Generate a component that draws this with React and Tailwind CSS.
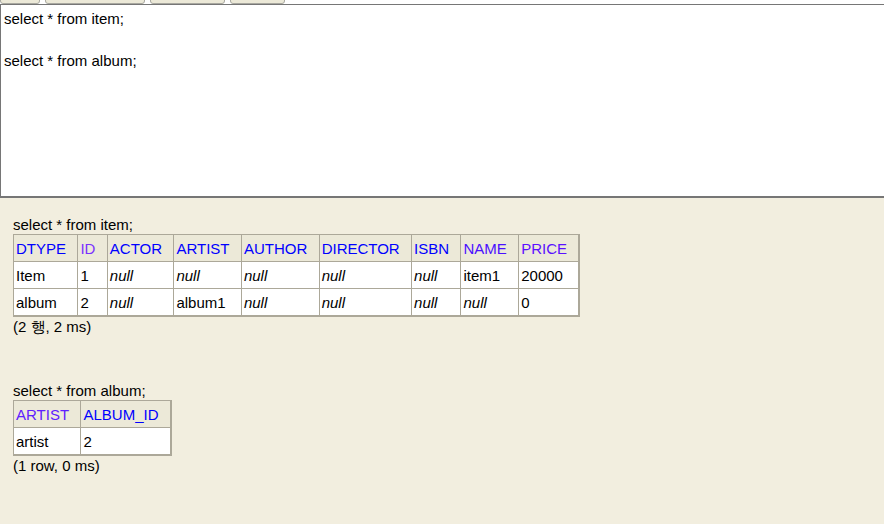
import React from "react";

const items = {
    columns: [
        { name: "DTYPE", color: "text-[#0000ff]" },
        { name: "ID", color: "text-[#7a30ff]" },
        { name: "ACTOR", color: "text-[#0000ff]" },
        { name: "ARTIST", color: "text-[#0000ff]" },
        { name: "AUTHOR", color: "text-[#0000ff]" },
        { name: "DIRECTOR", color: "text-[#0000ff]" },
        { name: "ISBN", color: "text-[#0000ff]" },
        { name: "NAME", color: "text-[#4a10ff]" },
        { name: "PRICE", color: "text-[#5a10ff]" },
    ],
    rows: [
        ["Item", "1", null, null, null, null, null, "item1", "20000"],
        ["album", "2", null, "album1", null, null, null, null, "0"],
    ],
};

const albums = {
    columns: [
        { name: "ARTIST", color: "text-[#6020ff]" },
        { name: "ALBUM_ID", color: "text-[#0000ff]" },
    ],
    rows: [["artist", "2"]],
};

// ResultTable renders one result set the way the console does
function ResultTable({ data }) {
    return (
        <table className="border-collapse border border-r-2 border-b-2 border-[#aca899]">
            <thead>
                <tr>
                    {data.columns.map((c) => (
                        <th
                            key={c.name}
                            className={`border border-[#aca899] bg-[#ece9d8] font-normal text-left pl-[2px] pr-[11.4px] pt-[5px] pb-[3px] leading-[18px] ${c.color}`}
                        >
                            {c.name}
                        </th>
                    ))}
                </tr>
            </thead>
            <tbody>
                {data.rows.map((row, i) => (
                    <tr key={i} className="bg-white">
                        {row.map((v, j) => (
                            <td
                                key={j}
                                className="border border-[#aca899] pl-[2px] pr-[11.4px] pt-[5px] pb-[3px] leading-[18px]"
                            >
                                {v === null ? <i>null</i> : v}
                            </td>
                        ))}
                    </tr>
                ))}
            </tbody>
        </table>
    );
}

export default function App() {
    return (
        <div className="w-[884px] h-[524px] overflow-hidden bg-[#f2eedf] text-black text-[15px] font-['Liberation_Sans',Arial,sans-serif]">
            {/* toolbar buttons, mostly scrolled out of view */}
            <div className="h-[4px] bg-white flex items-end gap-[5px] overflow-hidden">
                <div className="w-[40px] h-[14px] shrink-0 bg-[#ece9d8] border border-[#a8a8a0] rounded-[3px]" />
                <div className="w-[100px] h-[14px] shrink-0 bg-[#ece9d8] border border-[#a8a8a0] rounded-[3px]" />
                <div className="w-[75px] h-[14px] shrink-0 bg-[#ece9d8] border border-[#a8a8a0] rounded-[3px]" />
                <div className="w-[55px] h-[14px] shrink-0 bg-[#ece9d8] border border-[#a8a8a0] rounded-[3px]" />
            </div>

            {/* sql editor */}
            <div className="w-[900px] h-[194px] bg-white border-l border-t border-b-2 border-[#767676] pl-[3px] pt-[3px] leading-[21px] whitespace-pre">
                <div>select * from item;</div>
                <div>&nbsp;</div>
                <div>select * from album;</div>
            </div>

            {/* results */}
            <div className="pl-[13px] pt-[18px] leading-[18px]">
                <div>select * from item;</div>
                <ResultTable data={items} />
                <div className="mt-[1px]">(2 행, 2 ms)</div>

                <div className="mt-[46px]">select * from album;</div>
                <ResultTable data={albums} />
                <div className="mt-[1px]">(1 row, 0 ms)</div>
            </div>
        </div>
    );
}
